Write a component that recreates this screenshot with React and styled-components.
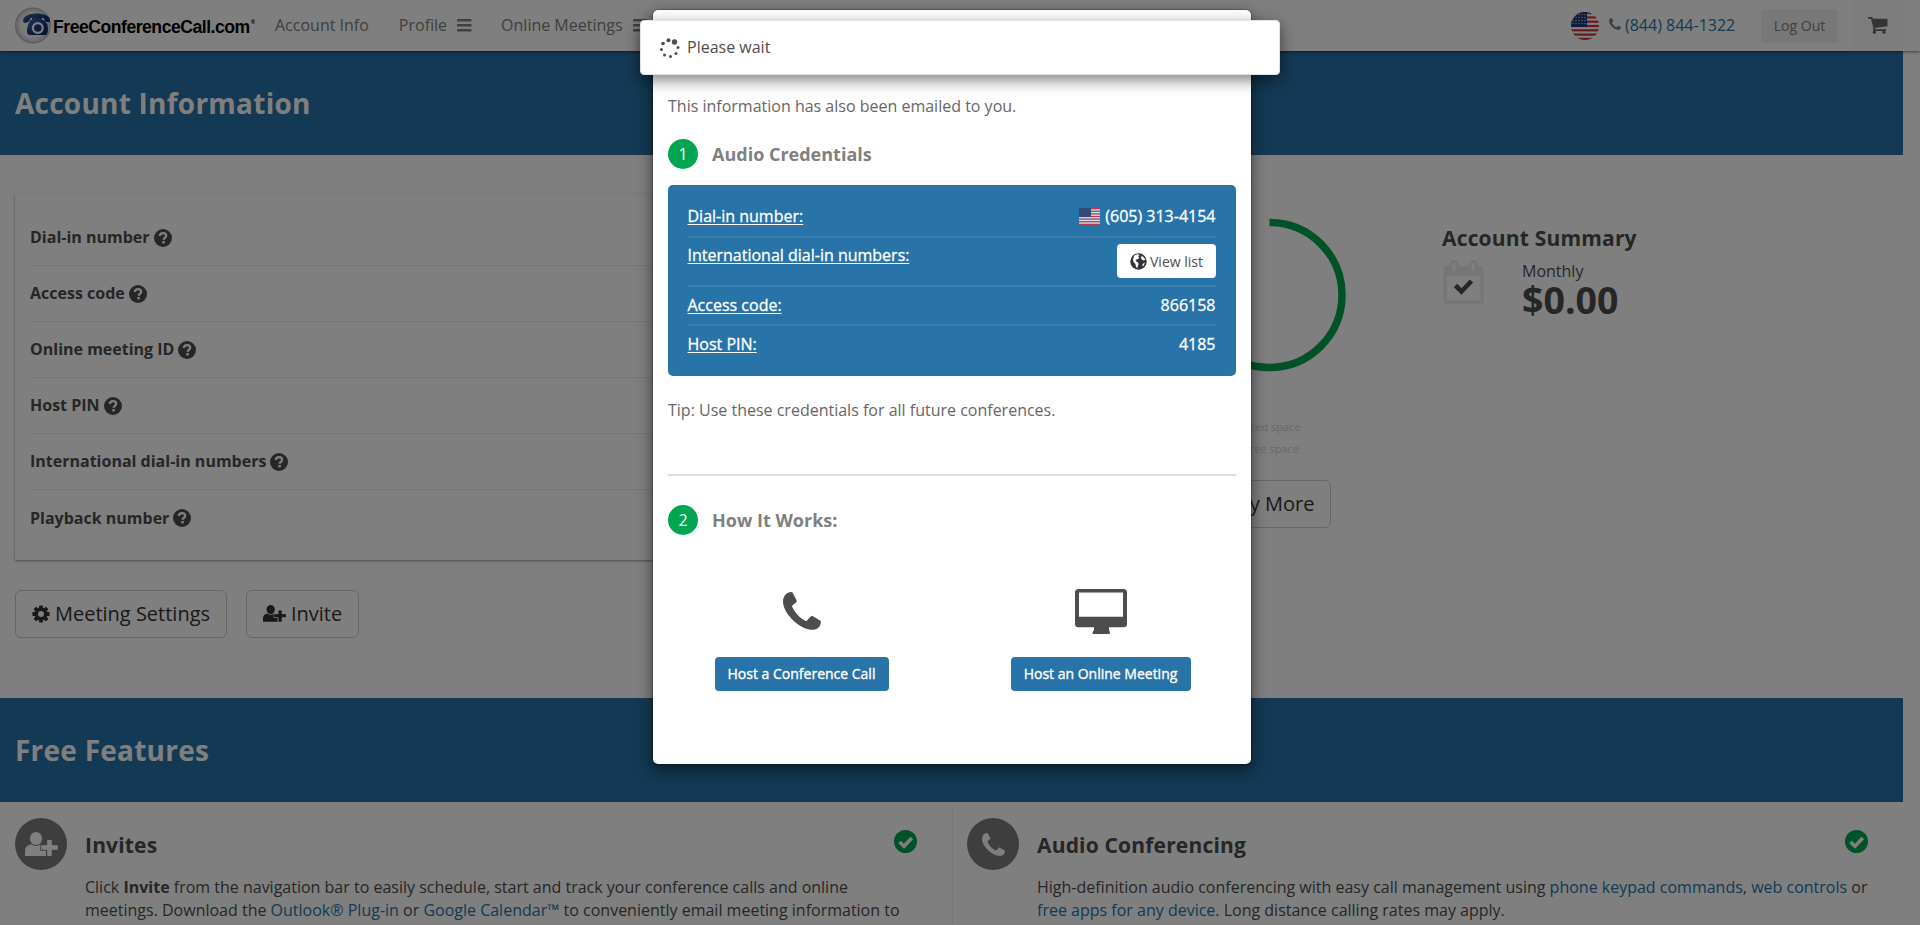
import React from "react";
import styled, { createGlobalStyle } from "styled-components";

const Global = createGlobalStyle`
  *, *::before, *::after { box-sizing: border-box; }
  html, body { margin: 0; padding: 0; overflow: hidden; background: #fff; }
  body { font: 400 16px/23px "Open Sans", sans-serif; color: #4d4d4d; }
  svg { display: block; flex: none; }
`;

const Screen = styled.div`
  position: relative;
  width: 1920px;
  height: 925px;
  overflow: hidden;
`;

const Header = styled.header`
  display: flex;
  align-items: center;
  height: 51px;
  width: 1920px;
  padding-left: 15px;
  background: #fff;
  box-shadow: 0 1px 3px rgba(0, 0, 0, 0.5);
  position: relative;
  z-index: 1;
`;

const Logo = styled.div`
  display: flex;
  align-items: center;
  width: 260px;
  font: 700 17.6px/24px "Liberation Sans", Arial, sans-serif;
  color: #000;
  white-space: nowrap;
`;

const LogoText = styled.span`
  margin: 2px 0 0 1px;
  letter-spacing: -0.48px;
`;

const LogoMark = styled.sup`
  font-size: 6px;
  line-height: 6px;
  margin: -7px 0 0 1px;
`;

const NavItem = styled.span`
  display: flex;
  align-items: center;
  gap: 10px;
  color: #808080;
  margin-right: ${(p) => p.$gap || 30}px;
  white-space: nowrap;
  height: 23px;
`;

const HeaderRight = styled.div`
  display: flex;
  align-items: center;
  margin-left: auto;
  width: 349px;
  height: 51px;
`;

const PhoneLink = styled.span`
  display: flex;
  align-items: flex-start;
  gap: 4px;
  margin: 0 0 1px 10px;
  width: 152px;
  color: #2873a8;
  white-space: nowrap;
  svg { margin-top: 4px; }
`;

const LogOut = styled.span`
  width: 77px;
  height: 34px;
  border-radius: 4px;
  background: #f0f0f0;
  color: #808080;
  font-size: 14px;
  line-height: 33px;
  text-align: center;
`;

const Cart = styled.span`
  display: flex;
  align-items: center;
  justify-content: center;
  width: 50px;
  height: 51px;
  margin-left: 15px;
  background: #fafafa;
`;

const Band = styled.section`
  display: flex;
  align-items: center;
  width: 1903px;
  height: 104px;
  padding-left: 15px;
  background: #2873a8;
`;

const BandTitle = styled.h2`
  margin: 0;
  font-size: 28px;
  line-height: 40px;
  font-weight: 700;
  letter-spacing: 0.24px;
  color: #fff;
`;

const Overview = styled.section`
  display: flex;
  width: 1903px;
  height: 543px;
  padding: 39px 15px 0;
`;

const InfoColumn = styled.div`
  width: 921px;
`;

const Card = styled.div`
  height: 366px;
  padding: 16px 15px 14px;
  border-radius: 2px;
  box-shadow: 0 1px 3px rgba(0, 0, 0, 0.4);
`;

const InfoRow = styled.div`
  display: flex;
  align-items: center;
  gap: 4px;
  height: 56px;
  font-weight: 700;
  border-bottom: 1px solid #eee;
  &:last-child { border-bottom: 0; }
`;

const Actions = styled.div`
  display: flex;
  gap: 19px;
  margin-top: 30px;
`;

const BigButton = styled.span`
  display: inline-flex;
  align-items: center;
  justify-content: center;
  gap: 5px;
  width: ${(p) => p.$w}px;
  height: 48px;
  padding-bottom: 1px;
  border: 1px solid #ccc;
  border-radius: 6px;
  font-size: 20px;
  line-height: 30px;
  color: #333;
`;

const Storage = styled.div`
  display: flex;
  flex-direction: column;
  align-items: center;
  width: 475px;
  padding: 24px 0 0 192px;
`;

const Legends = styled.div`
  margin: 44px 0 20px;
`;

const Legend = styled.div`
  width: 66px;
  margin-left: ${(p) => p.$indent}px;
  font-size: 11px;
  line-height: 22px;
  color: #d2d2d2;
  white-space: nowrap;
`;

const Summary = styled.div`
  margin-left: 31px;
  padding-top: 29px;
`;

const SummaryTitle = styled.h3`
  margin: 0;
  font-size: 21px;
  line-height: 30px;
  font-weight: 700;
  letter-spacing: 0.18px;
`;

const SummaryBody = styled.div`
  display: flex;
  gap: 37px;
  padding: 7px 0 0 1px;
`;

const Price = styled.div`
  margin-top: -1px;
  font-size: 37.5px;
  line-height: 36px;
  font-weight: 700;
`;

const Monthly = styled.div`
  line-height: 23px;
`;

const Features = styled.section`
  display: flex;
  width: 1903px;
  padding-top: 8px;
`;

const Feature = styled.article`
  display: flex;
  width: ${(p) => p.$w}px;
  height: 140px;
  padding: 8px 35px 0 ${(p) => (p.$line ? 14 : 15)}px;
  border-left: ${(p) => (p.$line ? "1px solid #eee" : "0")};
`;

const FeatureIcon = styled.span`
  display: flex;
  align-items: center;
  justify-content: center;
  flex: none;
  width: 52px;
  height: 52px;
  border-radius: 50%;
  background: #7a7d7b;
`;

const FeatureBody = styled.div`
  flex: 1;
  margin-left: 18px;
  white-space: nowrap;
`;

const FeatureHead = styled.h3`
  display: flex;
  justify-content: space-between;
  margin: 0 0 16px;
  font-size: 21px;
  line-height: 30px;
  font-weight: 700;
  letter-spacing: 0.18px;
  padding-top: 12px;
`;

const Link = styled.span`
  color: #2873a8;
`;

const Backdrop = styled.div`
  position: absolute;
  inset: 0;
  z-index: 2;
  background: rgba(0, 0, 0, 0.5);
`;

const Modal = styled.div`
  position: absolute;
  left: 653px;
  top: 10px;
  width: 598px;
  height: 754px;
  padding: 85px 15px 0;
  border-radius: 5px;
  background: #fff;
  box-shadow: 0 0 0 1px rgba(0, 0, 0, 0.2), 0 5px 15px 1px rgba(0, 0, 0, 0.5);
  color: #666;
`;

const Step = styled.div`
  display: flex;
  align-items: center;
  gap: 14px;
  height: 30px;
  margin-top: ${(p) => p.$mt}px;
  color: #808080;
  font-size: 18px;
  font-weight: 700;
`;

const StepNumber = styled.span`
  width: 30px;
  height: 30px;
  border-radius: 50%;
  background: #00a651;
  color: #fff;
  font-size: 16px;
  font-weight: 400;
  line-height: 31px;
  text-align: center;
`;

const Panel = styled.div`
  height: 191px;
  margin-top: 16px;
  padding: 12px 20px;
  border-radius: 5px;
  background: #2873a8;
  color: #fff;
`;

const PanelRow = styled.div`
  display: flex;
  justify-content: space-between;
  height: ${(p) => p.$h}px;
  padding-top: ${(p) => p.$pt}px;
  border-bottom: ${(p) => (p.$last ? "0" : "2px solid #3a7fb0")};
`;

const Term = styled.span`
  margin-left: -0.5px;
  text-decoration: underline;
  text-underline-offset: 2px;
  -webkit-text-stroke: 0.3px #fff;
`;

const Value = styled.span`
  display: flex;
  gap: 5px;
  align-items: center;
  height: 23px;
  margin-right: 0.5px;
  -webkit-text-stroke: 0.3px #fff;
`;

const ViewList = styled.span`
  display: flex;
  align-items: center;
  justify-content: center;
  gap: 3px;
  width: 99px;
  height: 34px;
  border-radius: 4px;
  background: #fff;
  color: #4d4d4d;
  font-size: 14px;
`;

const Tip = styled.p`
  margin: 23px 0 0;
`;

const Rule = styled.div`
  height: 2px;
  margin-top: 52px;
  background: #ddd;
`;

const Options = styled.div`
  display: flex;
  margin: 49px -14px 0 -16px;
`;

const Option = styled.div`
  display: flex;
  flex-direction: column;
  align-items: center;
  width: 299px;
`;

const IconSlot = styled.div`
  display: flex;
  align-items: center;
  height: 54px;
`;

const HostButton = styled.span`
  margin-top: 19px;
  width: ${(p) => p.$w}px;
  height: 34px;
  border-radius: 4px;
  background: #2873a8;
  color: #fff;
  font-size: 14px;
  line-height: 33px;
  text-align: center;
  white-space: nowrap;
  -webkit-text-stroke: 0.35px #fff;
`;

const Wait = styled.div`
  position: absolute;
  z-index: 3;
  left: 640px;
  top: 20px;
  display: flex;
  align-items: center;
  gap: 7px;
  width: 640px;
  height: 55px;
  padding-left: 19px;
  border: 1px solid #e2e2e2;
  border-radius: 4px;
  background: #fff;
  box-shadow: 0 5px 15px rgba(0, 0, 0, 0.5);
  color: #4d4d4d;
`;

const Phone = ({ size, color }) => (
  <svg width={size} height={size} viewBox="0 0 38 38" fill={color}>
    <path d="M9.5.4 13.5 8.2Q14 9.3 13.2 10.2L9.2 13.7Q9 14.4 9.4 15.3C12 20.5 17 26.5 22.6 29Q23.4 29.2 24 28.5L27.8 24.5Q28.8 23.4 30 24.2L37.4 28.8Q38 29.2 37.9 30C37.5 35.5 33.5 38.3 27.5 37.7C15 36.3 0 20.5 0 9.8C.2 3.5 3.5.3 8.3 0Q9.2 0 9.5.4Z" />
  </svg>
);

const Burger = () => (
  <svg width="15" height="13" viewBox="0 0 15 13" fill="#808080">
    <rect x="0" y="0" width="14.5" height="2.5" rx=".6" />
    <rect x="0" y="5" width="14.5" height="2.5" rx=".6" />
    <rect x="0" y="10" width="14.5" height="2.5" rx=".6" />
  </svg>
);

const Help = () => (
  <svg width="18" height="18" viewBox="0 0 18 18">
    <circle cx="9" cy="9" r="9" fill="#4d4d4d" />
    <path d="M5.9 7C5.9 5 7.2 4.1 9.1 4.1S12.2 5.2 12.2 6.8C12.2 8.900 9.600 9 9.600 10.800" fill="none" stroke="#fff" strokeWidth="2.3" />
    <rect x="8.3" y="12" width="2.5" height="2.4" fill="#fff" />
  </svg>
);

const Gear = () => (
  <svg width="18" height="18" viewBox="-9 -9 18 18" fill="#333">
    <mask id="gear-hole" maskUnits="userSpaceOnUse" x="-9" y="-9" width="18" height="18">
      <rect x="-9" y="-9" width="18" height="18" fill="#fff" />
      <circle r="3" fill="#000" />
    </mask>
    <g mask="url(#gear-hole)">
      {[0, 45, 90, 135].map((a) => (
        <rect key={a} x="-1.9" y="-8.6" width="3.8" height="17.2" rx=".6" transform={`rotate(${a})`} />
      ))}
      <circle r="6.5" />
    </g>
  </svg>
);

const AddUser = ({ w, color, bg }) => (
  <svg width={w} height={(w * 24) / 33} viewBox="0 0 33 24" fill={color}>
    <path d="M11 0C14.300 0 17 2.800 17 6.500S14.300 13 11 13 5 10.200 5 6.500 7.700 0 11 0Z" />
    <path d="M0 24V19C0 15 2.500 13 6.500 12.300 9 14.600 13 14.600 15.500 12.300 19 12.700 21 15 21 17V24Z" />
    <path d="M22 7.500h5v5.500h6v5h-6v6h-5v-6h-6v-5h6Z" stroke={bg} strokeWidth="1.4" />
    <path d="M22.300 8h4.400v5.300h6v4.400h-6V24h-4.400v-6.300h-6v-4.400h6Z" />
  </svg>
);

const CheckCircle = () => (
  <svg width="23" height="23" viewBox="0 0 23 23">
    <circle cx="11.5" cy="11.5" r="11.5" fill="#00a651" />
    <path d="M5.500 12 10 16.300 17.800 8" fill="none" stroke="#fff" strokeWidth="3.6" />
  </svg>
);

const Stripes = ({ w, h }) => (
  <>
    <rect width={w} height={h} fill="#fff" />
    {[0, 2, 4, 6, 8, 10, 12].map((i) => (
      <rect key={i} y={(i * h) / 13} width={w} height={h / 13} fill="#d22f3c" />
    ))}
  </>
);

const RoundFlag = () => (
  <svg width="28" height="28" viewBox="0 0 28 28">
    <clipPath id="round"><circle cx="14" cy="14" r="14" /></clipPath>
    <g clipPath="url(#round)">
      <Stripes w={28} h={28} />
      <rect width="16" height="15" fill="#1f3a78" />
      {[2, 5, 8, 11, 14].map((x) => [2.5, 5.5, 8.5, 11.5].map((y) => (
        <circle key={`${x}-${y}`} cx={x} cy={y} r=".65" fill="#c5cde0" />
      )))}
    </g>
  </svg>
);

const Flag = () => (
  <svg width="21" height="17" viewBox="0 0 21 17" opacity=".8">
    <g strokeWidth="0">
      <Stripes w={21} h={17} />
      <rect width="12" height="9" fill="#35406f" />
    </g>
  </svg>
);

const CartIcon = () => (
  <svg width="20" height="17" viewBox="0 0 20 17" fill="#696969">
    <path d="M0 0H4.200L5 1.800H19.500V9.200L7 11V12.300H18V14H5.200V10.300L3 1.800H0Z" />
    <circle cx="6.4" cy="15.2" r="1.6" />
    <circle cx="15.9" cy="15.2" r="1.6" />
  </svg>
);

const Globe = () => (
  <svg width="17" height="17" viewBox="0 0 17 17">
    <circle cx="8.5" cy="8.5" r="8.2" fill="#333" />
    <path d="M4 3.200C5 2 6.500 1.300 8 1.300L9.500 2.300 8.200 3.600 9.300 4.800 7.800 6.200 6.200 6.500 5.800 8 7.600 9.200 8.800 10.800 8 12.500 7.200 15.300 5.800 13.500 5.500 11 3.600 9.200 3 6.500ZM11.800 3 13.800 4.200 15.300 6.800 13.500 7.500 11.600 6.600 10.800 4.800ZM14.800 9.500 14 12.200 12.300 13.600 12.600 11Z" fill="#fff" />
  </svg>
);

const Calendar = () => (
  <svg width="42" height="44" viewBox="0 0 42 44">
    <rect x="2" y="9" width="37" height="33" rx="1" fill="none" stroke="#ececf0" strokeWidth="3" />
    <path d="M1 8Q1 6 3 6H38Q40 6 40 8V16H1Z" fill="#ececf0" />
    <rect x="8" y="1.5" width="6" height="11" rx="3" fill="#fff" stroke="#ececf0" strokeWidth="3" />
    <rect x="27" y="1.5" width="6" height="11" rx="3" fill="#fff" stroke="#ececf0" strokeWidth="3" />
    <path d="M12.500 25.500 18.500 31.500 28.500 21" fill="none" stroke="#4d4d4d" strokeWidth="4.6" />
  </svg>
);

const StorageChart = () => (
  <svg width="194" height="154" viewBox="-96.5 -77 194 154">
    <circle r="72.5" fill="none" stroke="#00a651" strokeWidth="7.5" strokeDasharray="350 200" transform="rotate(-90)" />
  </svg>
);

const Monitor = () => (
  <svg width="52" height="45" viewBox="0 0 52 45" fill="#4d4d4d">
    <path fillRule="evenodd" d="M3.500 0H48.500Q52 0 52 3.500V35Q52 38.300 48.500 38.300H34V41L35 43.500Q35 45 34 45H18.500Q17.500 45 17.500 43.500L19 41V38.300H3.500Q0 38.300 0 35V3.500Q0 0 3.500 0ZM4 3.500V27.700H48V3.500Z" />
  </svg>
);

const Spinner = () => (
  <svg width="20" height="20" viewBox="0 0 20 20" fill="#4d4d4d">
    <circle cx="8.5" cy="2.2" r="2" />
    <circle cx="14.5" cy="4" r="2.7" />
    <circle cx="18" cy="9.6" r="1.5" />
    <circle cx="16" cy="15.5" r="1.5" />
    <circle cx="10.5" cy="18.5" r="1.5" />
    <circle cx="4.5" cy="17" r="1.5" />
    <circle cx="1.5" cy="11.5" r="1.5" />
    <circle cx="3" cy="5.5" r="1.8" />
  </svg>
);

const LogoIcon = () => (
  <svg width="37" height="37" viewBox="0 0 37 37">
    <defs>
      <radialGradient id="badge"><stop offset=".65" stopColor="#f6f6f6" /><stop offset=".9" stopColor="#d5d5d5" /><stop offset="1" stopColor="#aaa" /></radialGradient>
      <linearGradient id="navy" x2="1" y2="1"><stop stopColor="#4667a2" /><stop offset=".6" stopColor="#173a7a" /><stop offset="1" stopColor="#0c2352" /></linearGradient>
    </defs>
    <circle cx="18" cy="18.5" r="18" fill="url(#badge)" />
    <path d="M8 14C8 9 14 6.500 21.500 6.500S35.500 8.500 35 14Q34.800 15.200 33 15.300L30.500 14.800 28.500 11H15.500L14 14.500 10.500 16Q8.200 16.200 8 14Z" fill="url(#navy)" />
    <path d="M15.500 13H17V10.800H27V13H29L32.500 17.500Q34 26 31 28H14Q10.500 26 13 18Z" fill="url(#navy)" />
    <circle cx="22.8" cy="21" r="4.9" fill="none" stroke="#fff" strokeWidth="2.3" />
  </svg>
);

const rows = ["Dial-in number", "Access code", "Online meeting ID", "Host PIN", "International dial-in numbers", "Playback number"];

export default function App() {
  return (
    <Screen>
      <Global />
      <Header>
        <Logo>
          <LogoIcon />
          <LogoText>FreeConferenceCall.com</LogoText>
          <LogoMark>®</LogoMark>
        </Logo>
        <NavItem>Account Info</NavItem>
        <NavItem $gap={29}>Profile <Burger /></NavItem>
        <NavItem>Online Meetings <Burger /></NavItem>
        <HeaderRight>
          <RoundFlag />
          <PhoneLink><Phone size={12} color="#808080" />(844) 844-1322</PhoneLink>
          <LogOut>Log Out</LogOut>
          <Cart><CartIcon /></Cart>
        </HeaderRight>
      </Header>
      <Band><BandTitle>Account Information</BandTitle></Band>
      <Overview>
        <InfoColumn>
          <Card>
            {rows.map((r) => (
              <InfoRow key={r}>{r}<Help /></InfoRow>
            ))}
          </Card>
          <Actions>
            <BigButton $w={212}><Gear />Meeting Settings</BigButton>
            <BigButton $w={113}><AddUser w={23} color="#333" bg="#fff" />Invite</BigButton>
          </Actions>
        </InfoColumn>
        <Storage>
          <StorageChart />
          <Legends>
            <Legend $indent={13}>Used space</Legend>
            <Legend $indent={15}>Free space</Legend>
          </Legends>
          <BigButton $w={123}>Buy More</BigButton>
        </Storage>
        <Summary>
          <SummaryTitle>Account Summary</SummaryTitle>
          <SummaryBody>
            <Calendar />
            <div>
              <Monthly>Monthly</Monthly>
              <Price>$0.00</Price>
            </div>
          </SummaryBody>
        </Summary>
      </Overview>
      <Band><BandTitle>Free Features</BandTitle></Band>
      <Features>
        <Feature $w={952}>
          <FeatureIcon><AddUser w={33} color="#fff" bg="#7a7d7b" /></FeatureIcon>
          <FeatureBody>
            <FeatureHead>Invites<CheckCircle /></FeatureHead>
            Click <b>Invite</b> from the navigation bar to easily schedule, start and track your conference calls and online<br />
            meetings. Download the <Link>Outlook® Plug-in</Link> or <Link>Google Calendar™</Link> to conveniently email meeting information to
          </FeatureBody>
        </Feature>
        <Feature $w={951} $line>
          <FeatureIcon><Phone size={23} color="#fff" /></FeatureIcon>
          <FeatureBody>
            <FeatureHead>Audio Conferencing<CheckCircle /></FeatureHead>
            High-definition audio conferencing with easy call management using <Link>phone keypad commands</Link>, <Link>web controls</Link> or<br />
            <Link>free apps for any device</Link>. Long distance calling rates may apply.
          </FeatureBody>
        </Feature>
      </Features>

      <Backdrop>
        <Modal>
          <div>This information has also been emailed to you.</div>
          <Step $mt={21}><StepNumber>1</StepNumber>Audio Credentials</Step>
          <Panel>
            <PanelRow $h={41} $pt={8}><Term>Dial-in number:</Term><Value><Flag />(605) 313-4154</Value></PanelRow>
            <PanelRow $h={49} $pt={6}><Term>International dial-in numbers:</Term><ViewList><Globe />View list</ViewList></PanelRow>
            <PanelRow $h={39} $pt={7}><Term>Access code:</Term><Value>866158</Value></PanelRow>
            <PanelRow $h={38} $pt={7} $last><Term>Host PIN:</Term><Value>4185</Value></PanelRow>
          </Panel>
          <Tip>Tip: Use these credentials for all future conferences.</Tip>
          <Rule />
          <Step $mt={29}><StepNumber>2</StepNumber>How It Works:</Step>
          <Options>
            <Option>
              <IconSlot><Phone size={38} color="#4d4d4d" /></IconSlot>
              <HostButton $w={174}>Host a Conference Call</HostButton>
            </Option>
            <Option>
              <IconSlot><Monitor /></IconSlot>
              <HostButton $w={180}>Host an Online Meeting</HostButton>
            </Option>
          </Options>
        </Modal>
      </Backdrop>
      <Wait><Spinner />Please wait</Wait>
    </Screen>
  );
}
